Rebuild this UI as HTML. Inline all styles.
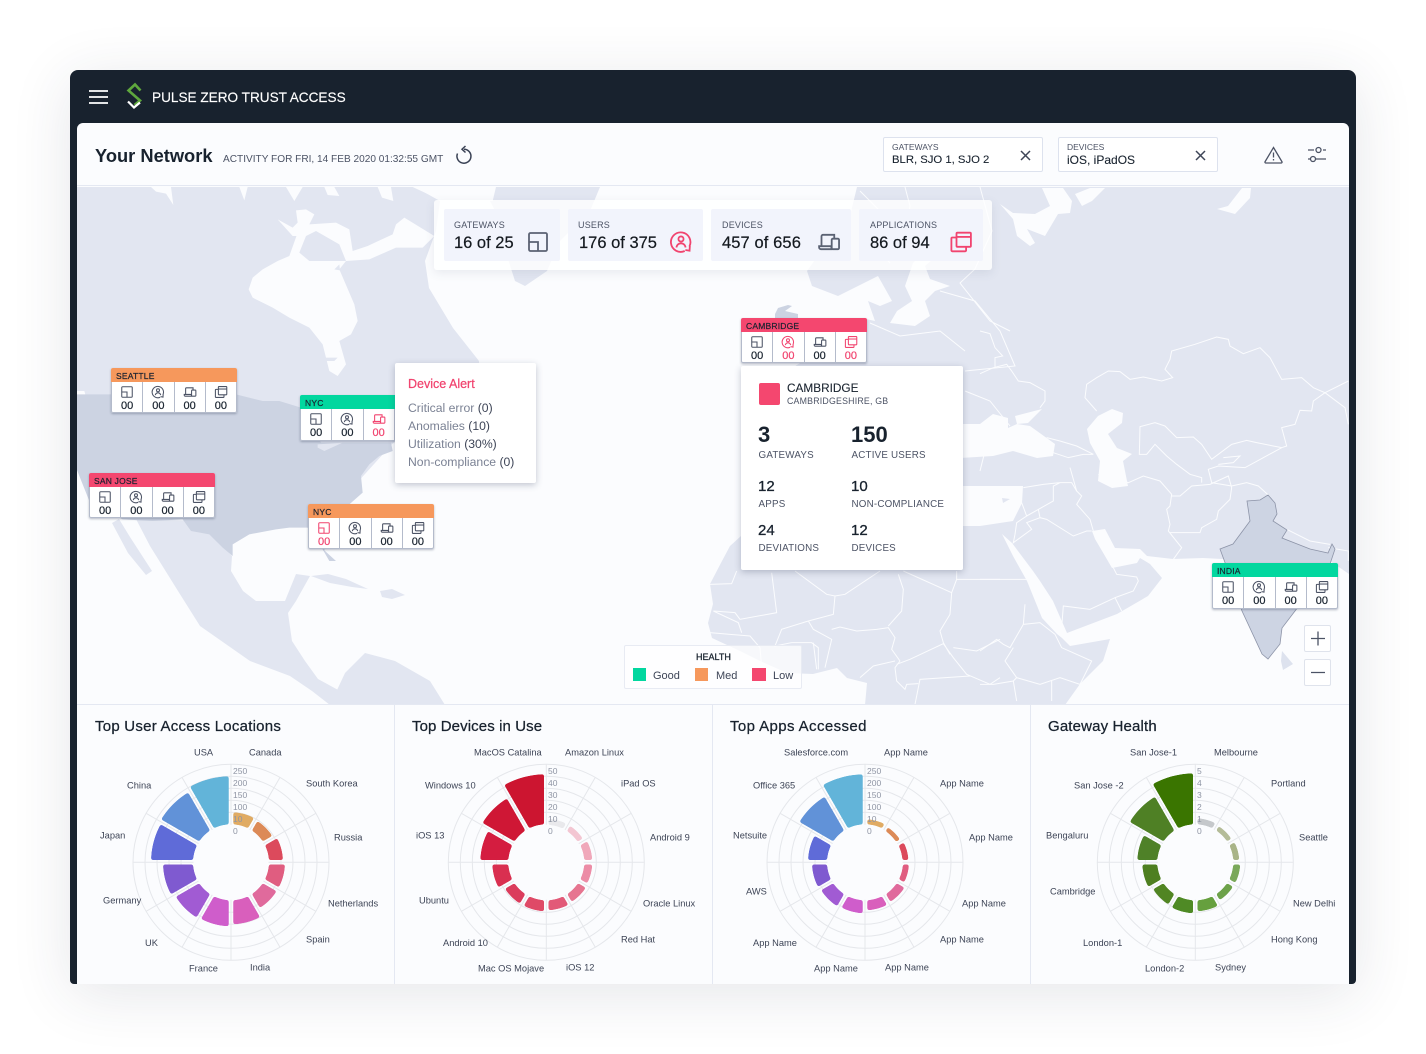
<!DOCTYPE html>
<html lang="en"><head><meta charset="utf-8"><title>Pulse Zero Trust Access</title>
<style>
*{box-sizing:border-box}
html,body{margin:0;padding:0;background:#fff}
body{width:1426px;height:1054px;position:relative;overflow:hidden;font-family:"Liberation Sans",sans-serif;color:#18222e}
.abs,.frame,.panel,.mapwrap,.t{position:absolute}
.frame{left:70px;top:70px;width:1286px;height:914px;background:#18222e;border-radius:8px 8px 4px 4px;box-shadow:0 10px 60px rgba(40,50,70,.12)}
.panel{left:77px;top:123px;width:1272px;height:861px;background:#fbfcfe;border-radius:6px 6px 0 0;overflow:hidden}
.mapwrap{left:77px;top:185px;width:1272px;height:519px;overflow:hidden;background:#fbfcfe;border-top:1px solid #e4e8f2}
.mapwrap svg{position:absolute;left:-77px;top:-185px}
.t{white-space:nowrap}
.stat{position:absolute;left:434px;top:200px;width:558px;height:70px;background:rgba(255,255,255,.8);border-radius:3px;box-shadow:0 3px 10px rgba(70,80,110,.1)}
.cell{position:absolute;top:9px;height:52px;background:rgba(240,243,252,.88);border-radius:2px}
.cell i{position:absolute;left:10px;top:11px;font:normal 9px "Liberation Sans",sans-serif;color:#4c5365;letter-spacing:.2px}
.cell u{position:absolute;left:10px;top:24px;font-size:16.5px;line-height:20px;text-decoration:none;color:#14191f;-webkit-text-stroke:.2px #14191f;white-space:nowrap}
.cell svg{position:absolute;top:21px;width:24px;height:24px;color:#5b6273}
.m{position:absolute;width:126px;height:45px;background:#fff;border-radius:2px;box-shadow:0 1px 2px rgba(50,60,90,.35)}
.m b{display:block;height:14px;line-height:16px;padding-left:5px;font-size:8.5px;font-weight:normal;color:#1a2230;-webkit-text-stroke:.2px #1a2230;letter-spacing:.2px;border-radius:2px 2px 0 0}
.m .c{display:flex;height:31px;border:1px solid #b4bbcb;border-top:0;border-radius:0 0 2px 2px}
.m .c div{flex:1;border-left:1px solid #b4bbcb;text-align:center;font-size:11px;line-height:11px;color:#18222e;-webkit-text-stroke:.2px currentColor}
.m .c div:first-child{border-left:0}
.m .c svg{display:block;width:14px;height:14px;margin:3px auto 2px;color:#4c5365;-webkit-text-stroke:0}
.m .r{color:#f1446f!important}
.m .r svg{color:#f1446f}
.O{background:#f6985c}.G{background:#02d79f}.P{background:#f4476f}
.box{position:absolute;top:137px;width:160px;height:35px;background:#fff;border:1.5px solid #dde2ee;border-radius:2px}
.box i{position:absolute;left:8px;top:4px;font:normal 8.5px "Liberation Sans",sans-serif;color:#4c5365}
.box u{position:absolute;left:8px;top:15px;font-size:12px;text-decoration:none;color:#18222e;-webkit-text-stroke:.1px #18222e;white-space:nowrap}
.card{position:absolute;background:#fff;border-radius:2px;box-shadow:0 2px 7px rgba(60,70,100,.3)}
.lb{position:absolute;font-size:9.8px;color:#4c5365;white-space:nowrap;letter-spacing:.2px}
.nm{position:absolute;color:#18222e;white-space:nowrap;-webkit-text-stroke:.3px #18222e}
.al{position:absolute;left:13px;font-size:12.2px;color:#7b8294;white-space:nowrap}
.al span{color:#3e4557}
.ttl{position:absolute;top:718px;font-size:15px;line-height:18px;color:#18222e;-webkit-text-stroke:.25px #18222e;letter-spacing:.15px;white-space:nowrap}
.zb{position:absolute;left:1304px;width:27px;height:27px;background:#fff;border:1px solid #dfe3ec;border-radius:2px}
</style></head><body>
<svg width="0" height="0" style="position:absolute"><defs>
<symbol id="ig" viewBox="0 0 16 16" fill="none" stroke="currentColor" stroke-width="1.2"><rect x="2" y="2" width="12" height="12" rx="1"/><path d="M2 8h6v6"/></symbol>
<symbol id="iu" viewBox="0 0 16 16" fill="none" stroke="currentColor" stroke-width="1.2"><path d="M13.6 11A6.500 6.500 0 1 0 10.500 14"/><circle cx="8" cy="6" r="1.7"/><path d="M4.900 11.600C5.300 9.700 6.400 8.900 8 8.900s2.700.8 3.100 2.700"/><path d="M13.900 10.600l-.2 3.200-2.800-.5"/></symbol>
<symbol id="id" viewBox="0 0 16 16" fill="none" stroke="currentColor" stroke-width="1.2"><path d="M3 10.500V4.200a1 1 0 0 1 1-1h7.500v2.400"/><rect x="9.800" y="5.800" width="4.900" height="7" rx=".8"/><path d="M1.400 10.800h8.200v2H2.600a1.200 1.200 0 0 1-1.200-1.200z"/></symbol>
<symbol id="ia" viewBox="0 0 16 16" fill="none" stroke="currentColor" stroke-width="1.2"><rect x="5" y="1.800" width="9.600" height="9.400" rx=".6"/><path d="M5 4.600h9.400"/><path d="M5 5H2.200a.6.6 0 0 0-.6.6v8a.6.6 0 0 0 .6.6h8.600a.6.6 0 0 0 .6-.6V11.200"/></symbol>
<mask id="sp" maskUnits="userSpaceOnUse" x="-110" y="-110" width="220" height="220"><rect x="-110" y="-110" width="220" height="220" fill="#fff"/><g stroke="#000" stroke-width="4.500"><path d="M0-105V105M-105 0H105M-52.500-91L52.500 91M52.500-91L-52.500 91M-91-52.500L91 52.500M91-52.500L-91 52.500"/></g></mask>
<filter id="rnd" x="-10%" y="-10%" width="120%" height="120%" color-interpolation-filters="sRGB"><feGaussianBlur stdDeviation="1.100"/><feComponentTransfer><feFuncA type="linear" slope="8" intercept="-3.500"/></feComponentTransfer></filter>
<g id="grid" fill="none" stroke="#e5e7eb" stroke-width="1"><circle r="50"/><circle r="62"/><circle r="74"/><circle r="86"/><circle r="98"/><path d="M0-98V98M-98 0H98M-49-84.900L49 84.900M49-84.900L-49 84.900M-84.900-49L84.900 49M84.900-49L-84.900 49"/><circle r="37.500" fill="#fbfcfe" stroke="none"/></g>
</defs></svg>

<div class="frame"></div>
<div class="panel"></div>

<!-- top bar -->
<svg class="abs" style="left:0;top:0" width="1426" height="125" viewBox="0 0 1426 125" fill="none">
<path d="M89 91h19M89 97h19M89 103h19" stroke="#fff" stroke-width="1.800"/>
<path d="M140.500 90.500L135 84.500L128.500 90.500L140 100.500L134.500 105" stroke="#5fa83d" stroke-width="2.600"/>
<path d="M128 101.500L134 107.500L140 102.500" stroke="#fff" stroke-width="2.200"/>
</svg>
<div class="t" style="left:152px;top:90px;font-size:13.6px;line-height:16px;color:#fff;-webkit-text-stroke:.15px #fff">PULSE ZERO TRUST ACCESS</div>

<!-- header -->
<div class="t" style="left:95px;top:145px;font-size:18.3px;line-height:22px;font-weight:bold;color:#18222e">Your Network</div>
<div class="t" style="left:223px;top:154px;font-size:10.1px;line-height:12px;color:#4c5365">ACTIVITY FOR FRI, 14 FEB 2020 01:32:55 GMT</div>
<div class="box" style="left:883px"><i>GATEWAYS</i><u style="font-size:11.3px;top:15.500px">BLR, SJO 1, SJO 2</u></div>
<div class="box" style="left:1058px"><i>DEVICES</i><u>iOS, iPadOS</u></div>

<!-- map -->
<div class="mapwrap">
<svg width="1426" height="1054" viewBox="0 0 1426 1054">
<g fill="#e2e6f1">
<polygon points="77,186 415,186 440,200 436,230 425,260 429,287 453,327 479,360 480,400 395,440 345,495 300,515 77,465"/>
<polygon points="493,186 490,200 503,225 507,255 515,280 525,285 547,270 560,240 590,210 600,186"/>
<polygon points="647,222 660,213 671,216 668,228 654,233"/>
<polygon points="857,186 1349,186 1349,704 865,704 867,682 847,677 837,667 813,673 787,672 760,660 740,650 712,637 708,622 713,603 710,583 722,560 730,545 741,535 741,400 800,362 835,340 850,325 866,318 875,320 868,300 880,305 892,300 878,275 858,285 838,295 812,285 807,270 825,245 850,215"/>
<!-- Mexico & Central America -->
<polygon points="119,518 130,536 152,570 146,574 128,552 112,522"/>
<polygon points="136,518 150,545 178,590 200,625 250,660 290,675 312,690 330,704 345,704 340,690 318,678 305,660 292,640 288,612 296,600 310,575 296,573 285,600 256,600 243,590 231,570 232,555 200,520"/>
<polygon points="330,704 345,672 365,652 395,660 430,680 445,704"/>
<polygon points="311,575 328,573 346,578 368,588 352,586 330,582"/>
<polygon points="380,590 392,588 405,594 392,598 382,596"/>
</g>
<!-- Canada water -->
<g transform="translate(76 180) scale(.33333)" fill="#fbfcfe">
<polygon points="518,325 530,290 560,265 605,240 640,225 665,155 690,165 670,215 700,240 775,240 810,240 790,265 835,370 845,420 825,460 790,480 810,550 785,585 760,570 740,490 700,440 640,410 590,380 530,350"/>
<polygon points="605,115 650,140 665,125 660,88 690,85 715,100 700,130 780,125 820,145 830,210 875,195 950,160 960,130 985,110 1075,165 1040,200 960,200 880,235 810,240 790,190 720,150 690,165 650,165"/>
<polygon points="225,18 285,18 292,72 270,38 240,32"/>
<polygon points="490,18 515,18 505,58"/>
<polygon points="630,18 680,18 655,60"/>
<polygon points="745,18 775,18 790,45 755,42"/>
<polygon points="905,18 945,18 952,60 918,50"/>
<polygon points="1010,18 1260,18 1250,60 1090,55"/>
<polygon points="0,630 25,630 35,665 0,660"/>
</g>
<g transform="translate(76 180) scale(.33333)">
<polygon fill="#e2e6f1" points="775,265 790,250 792,268"/>
<polygon fill="#e2e6f1" points="745,530 785,530 775,540 750,540"/>
<polygon fill="#ccd3e2" points="0,640 480,640 560,660 610,660 675,680 735,785 945,785 950,810 910,825 880,850 855,885 860,935 820,970 760,1030 745,1108 780,1140 760,1140 740,1105 695,1040 640,1040 600,1045 520,1060 470,1090 470,1125 440,1100 400,1060 345,1050 320,1015 230,1020 140,1015 40,960 0,860"/>
<polygon fill="#e2e6f1" points="725,790 800,785 745,810 725,800"/>
</g>
<!-- Eurasia/Africa water -->
<g fill="#fbfcfe">
<polygon points="1000,203 1013,212 1035,213 1050,205 1042,187 1063,187 1072,200 1070,212 1058,213 1045,235 1027,228 1035,242 1030,245 1017,235 1013,218"/>
<polygon points="1075,193 1090,187 1105,187 1092,200 1082,205"/>
<polygon points="1217,208 1228,205 1242,187 1251,187 1250,197 1235,213"/>
<polygon points="1087,428 1098,415 1112,408 1123,412 1122,422 1108,433 1117,447 1132,453 1123,460 1128,485 1112,487 1098,480 1100,460 1090,442"/>
<polygon points="960,423 980,423 993,413 1008,417 1008,427 1017,423 1030,425 1055,443 1053,455 1037,457 1013,450 993,455 960,457"/>
<polygon points="1015,415 1042,408 1028,422 1017,423"/>
<polygon points="960,485 1023,485 1022,502 1013,520 980,525 960,525"/>
<polygon points="925,250 913,262 905,285 912,300 897,310 890,322 915,325 930,315 925,300 935,290 950,285 930,278 925,265 940,252"/>
<polygon points="1349,573 1349,704 1065,704 1080,683 1103,660 1110,638 1070,645 1062,637 1057,633 1042,617 1027,580 1013,555 1002,533 1012,542 1033,570 1040,580 1053,600 1067,632 1117,613 1148,595 1162,577 1150,563 1140,557 1137,562 1112,567 1105,555 1095,538 1092,530 1105,528 1115,547 1140,548 1147,555 1173,558 1203,557 1260,560 1330,560"/>
</g>
<polygon points="1002,497 1010,498 1003,502" fill="#e2e6f1"/>
<polygon points="1282,650 1293,663 1283,669 1281,660" fill="#dde2ee"/>
<polygon points="775,313 778,307 788,304 792,305 785,310 798,313 798,318 775,318" fill="#ccd3e2"/>
<!-- Borders -->
<g transform="translate(980 180) scale(.33333)" fill="none" stroke="#fbfcfe" stroke-width="3">
<path d="M0 450L30 458 45 500 68 525 45 530 45 558M0 578L40 560 80 550 95 570 115 600 150 605 195 630 195 660 180 680"/>
<path d="M350 690L315 650 320 610 350 590 385 570 420 572 450 595 490 588 545 600 578 590 555 565 570 535 575 510 645 490 710 468 745 475 750 495 790 518 840 500 870 530 905 595 965 590 1000 620 1035 635 1105 600"/>
<path d="M1035 635L1000 660 995 690 960 688 945 730 905 740 920 795 905 800 830 785 800 778 755 790 695 835 665 790 640 768 590 770 555 735 525 725 480 737 478 820 500 820 525 790 560 825 590 850 630 880 665 890 665 905"/>
<path d="M905 800L850 830 795 860 715 855 685 865 695 905 755 915M730 830L780 825 760 845 715 850M1035 635L1095 680 1105 730"/>
<path d="M200 770L240 780 290 795 340 820M220 815L265 830 310 820 340 820M270 860L290 930 305 945 290 970 330 1015 340 1050"/>
<path d="M355 880L445 905 490 885 540 900 575 940 570 975 560 985 570 1030 565 1050 605 1100 580 1135"/>
<path d="M575 945L600 945 635 915 690 910 745 885 755 920 750 955 715 990 710 1015 665 1040 660 1055 570 1055M755 915L800 905 835 915 865 942"/>
<path d="M130 920L190 910 240 905 275 905 290 930M125 965L140 1005 220 960 220 915 240 905M175 985L180 1010 200 1015 280 1065 320 1050 335 1050M140 1005L110 1025 105 1060 100 1085 155 1045 140 1025 180 1010"/>
<path d="M400 1160L410 1180 470 1188 475 1200 460 1230 405 1250 425 1290M405 1250L330 1285 250 1275 245 1340"/>
<path d="M0 1195H140M135 1270L130 1330 90 1400 70 1390 50 1375 0 1410M130 1330L180 1325 225 1360 245 1400 335 1440 300 1510 240 1490 180 1510 110 1490 75 1440 100 1400M110 1490L100 1500 40 1510 0 1510M100 1500L110 1560M215 1500V1560"/>
<path d="M920 1045L990 1080 1050 1090M1045 1100L1105 1110 1105 1140"/>
</g>
<g transform="translate(600 560) scale(.33333)" fill="none" stroke="#fbfcfe" stroke-width="3">
<path d="M515 35L530 155 420 175 405 155 340 150M330 70L395 68 410 30M585 30L680 100 705 105 735 100 840 30M705 105L700 160 625 180 545 205 525 255 575 245M625 180L640 205 695 235 675 320M695 205L720 198 770 210 830 205 865 200 885 230 875 265 900 300M865 195L905 150 910 85 895 40M910 30L1055 95 1050 160 1020 210 1030 245 1050 280M1070 30V55H1200M1055 95L1070 55M890 310L930 295 1030 248 1060 290 1100 340 1110 345 960 355 945 430M900 300L885 320 890 360 915 385 920 370 955 368M885 300L820 315 780 350M575 245H635L655 260V325M640 245L650 325M330 215L390 220 450 225 480 260 485 320M340 150L415 185 425 215M1060 260L1130 270 1200 235M1100 340L1170 370 1200 350"/>
</g>
<g fill="none" stroke="#fbfcfe" stroke-width="1">
<path d="M860 190L880 210 870 240 890 262M905 186L910 205 905 235 925 250M980 186L992 230 975 268 960 282 990 320 1010 330M940 290L975 300 1000 330 1015 365 965 370M870 322L900 335 940 330 965 350M965 390L990 400 1010 425M965 440L985 450 980 470"/>
</g>
<!-- India -->
<polygon points="1268,494 1275,502 1277,513 1273,520 1287,529 1282,537 1310,548 1328,552 1332,543 1335,548 1330,563 1295,610 1282,627 1280,643 1268,658 1262,653 1242,610 1227,567 1220,548 1233,543 1250,520 1247,500 1260,499" fill="#cdd4e3" stroke="#8d94a8" stroke-width=".8"/>
</svg>
</div>

<!-- Stats -->
<div class="stat">
<div class="cell" style="left:10px;width:116px"><i>GATEWAYS</i><u>16 of 25</u><svg style="left:82px"><use href="#ig"/></svg></div>
<div class="cell" style="left:134px;width:135px"><i>USERS</i><u style="left:11px">176 of 375</u><svg style="left:101px;color:#f1446f"><use href="#iu"/></svg></div>
<div class="cell" style="left:277px;width:140px"><i style="left:11px">DEVICES</i><u style="left:11px;letter-spacing:.1px">457 of 656</u><svg style="left:106px"><use href="#id"/></svg></div>
<div class="cell" style="left:425px;width:124px"><i style="left:11px">APPLICATIONS</i><u style="left:11px">86 of 94</u><svg style="left:90px;color:#f1446f"><use href="#ia"/></svg></div>
</div>

<!-- Markers -->
<div class="m" style="left:111px;top:368px"><b class="O">SEATTLE</b><div class="c"><div><svg><use href="#ig"/></svg>00</div><div><svg><use href="#iu"/></svg>00</div><div><svg><use href="#id"/></svg>00</div><div><svg><use href="#ia"/></svg>00</div></div></div>
<div class="m" style="left:300px;top:395px;height:46px"><b class="G">NYC</b><div class="c" style="height:32px"><div><svg><use href="#ig"/></svg>00</div><div><svg><use href="#iu"/></svg>00</div><div class="r"><svg><use href="#id"/></svg>00</div><div><svg><use href="#ia"/></svg>00</div></div></div>
<div class="m" style="left:89px;top:473px"><b class="P">SAN JOSE</b><div class="c"><div><svg><use href="#ig"/></svg>00</div><div><svg><use href="#iu"/></svg>00</div><div><svg><use href="#id"/></svg>00</div><div><svg><use href="#ia"/></svg>00</div></div></div>
<div class="m" style="left:308px;top:504px"><b class="O">NYC</b><div class="c"><div class="r"><svg><use href="#ig"/></svg>00</div><div><svg><use href="#iu"/></svg>00</div><div><svg><use href="#id"/></svg>00</div><div><svg><use href="#ia"/></svg>00</div></div></div>
<div class="m" style="left:741px;top:318px"><b class="P">CAMBRIDGE</b><div class="c"><div><svg><use href="#ig"/></svg>00</div><div class="r"><svg><use href="#iu"/></svg>00</div><div><svg><use href="#id"/></svg>00</div><div class="r"><svg><use href="#ia"/></svg>00</div></div></div>
<div class="m" style="left:1212px;top:563px;height:46px"><b class="G">INDIA</b><div class="c" style="height:32px"><div><svg><use href="#ig"/></svg>00</div><div><svg><use href="#iu"/></svg>00</div><div><svg><use href="#id"/></svg>00</div><div><svg><use href="#ia"/></svg>00</div></div></div>

<!-- Device alert -->
<div class="card" style="left:395px;top:363px;width:141px;height:120px">
<div class="t" style="left:13px;top:14px;font-size:12.500px;color:#f1446f;-webkit-text-stroke:.25px #f1446f">Device Alert</div>
<div class="al" style="top:38px">Critical error <span>(0)</span></div>
<div class="al" style="top:56px">Anomalies <span>(10)</span></div>
<div class="al" style="top:74px">Utilization <span>(30%)</span></div>
<div class="al" style="top:92px">Non-compliance <span>(0)</span></div>
</div>

<!-- Cambridge card -->
<div class="card" style="left:741px;top:366px;width:222px;height:204px">
<div class="abs" style="left:18px;top:17px;width:21px;height:22px;background:#f4476f;border-radius:2px"></div>
<div class="nm" style="left:46px;top:15px;font-size:11.800px;-webkit-text-stroke:.1px #18222e">CAMBRIDGE</div>
<div class="lb" style="left:46px;top:30px;font-size:8.800px">CAMBRIDGESHIRE, GB</div>
<div class="nm" style="left:17px;top:56px;font-size:22px;font-weight:bold;-webkit-text-stroke:0">3</div>
<div class="nm" style="left:110px;top:56px;font-size:22px;font-weight:bold;-webkit-text-stroke:0">150</div>
<div class="lb" style="left:17.500px;top:84px">GATEWAYS</div>
<div class="lb" style="left:110.500px;top:84px">ACTIVE USERS</div>
<div class="nm" style="left:17px;top:112px;font-size:15px">12</div>
<div class="nm" style="left:110px;top:112px;font-size:15px">10</div>
<div class="lb" style="left:17.500px;top:133px">APPS</div>
<div class="lb" style="left:110.500px;top:133px">NON-COMPLIANCE</div>
<div class="nm" style="left:17px;top:156px;font-size:15px">24</div>
<div class="nm" style="left:110px;top:156px;font-size:15px">12</div>
<div class="lb" style="left:17.500px;top:177px">DEVIATIONS</div>
<div class="lb" style="left:110.500px;top:177px">DEVICES</div>
</div>

<!-- Legend -->
<div class="abs" style="left:624px;top:645px;width:178px;height:44px;background:rgba(255,255,255,.72);border:1px solid #e8ebf3;border-radius:2px"></div>
<div class="t" style="left:696px;top:652px;font-size:9px;line-height:11px;color:#18222e;-webkit-text-stroke:.25px #18222e">HEALTH</div>
<div class="abs" style="left:633px;top:668px;width:13px;height:13px;background:#02d79f"></div>
<div class="t" style="left:653px;top:669.500px;font-size:11px;line-height:13px;color:#3e4557">Good</div>
<div class="abs" style="left:695px;top:668px;width:13px;height:13px;background:#f6985c"></div>
<div class="t" style="left:716px;top:669.500px;font-size:11px;line-height:13px;color:#3e4557">Med</div>
<div class="abs" style="left:752px;top:668px;width:14px;height:13px;background:#f4476f"></div>
<div class="t" style="left:773px;top:669.500px;font-size:11px;line-height:13px;color:#3e4557">Low</div>

<div class="zb" style="top:625px"></div>
<div class="zb" style="top:659px"></div>

<!-- Header & misc icons -->
<svg class="abs" style="left:0;top:0" width="1426" height="704" viewBox="0 0 1426 704" fill="none">
<g stroke="#3a4255" stroke-width="1.500">
<path d="M464 149.200A7 7 0 1 1 457.500 153.500"/><path d="M465.500 146L462 149.200L465.500 152.500"/>
</g>
<g stroke="#3e4557" stroke-width="1.500">
<path d="M1021 151L1030 160M1030 151L1021 160M1196 151L1205 160M1205 151L1196 160"/>
</g>
<g stroke="#4c5365" stroke-width="1.300">
<path d="M1273.500 147.500L1281.800 161.500A.9 .9 0 0 1 1281 163H1266A.9 .9 0 0 1 1265.200 161.500Z"/><path d="M1273.500 152.500V157.500M1273.500 159V160.500"/>
<path d="M1308 150H1314M1323 150H1326M1308 159H1310M1316 159H1326"/><circle cx="1318.500" cy="150" r="2.500"/><circle cx="1313" cy="159" r="2.500"/>
<path d="M1311 638.500H1325M1318 631.500V645.500M1311 672.500H1325"/>
</g>
</svg>

<!-- Bottom panels -->
<div class="abs" style="left:77px;top:704px;width:1272px;height:280px;background:#fbfcfe;border-top:1px solid #e4e8f2"></div>
<div class="abs" style="left:394px;top:704px;width:1px;height:280px;background:#e4e8f2"></div>
<div class="abs" style="left:712px;top:704px;width:1px;height:280px;background:#e4e8f2"></div>
<div class="abs" style="left:1030px;top:704px;width:1px;height:280px;background:#e4e8f2"></div>
<div class="ttl" style="left:95px;letter-spacing:.24px">Top User Access Locations</div>
<div class="ttl" style="left:412px;letter-spacing:.1px">Top Devices in Use</div>
<div class="ttl" style="left:730px;letter-spacing:.4px">Top Apps Accessed</div>
<div class="ttl" style="left:1048px">Gateway Health</div>

<svg class="abs" style="left:0;top:0" width="1426" height="1054" viewBox="0 0 1426 1054">
<g transform="translate(231 862.300)"><use href="#grid"/>
<g filter="url(#rnd)"><g mask="url(#sp)" fill="none" stroke-dasharray="30 330">
<circle r="44" stroke-width="12" pathLength="360" stroke="#e0ab63" transform="rotate(-90)"/>
<circle r="43.500" stroke-width="11" pathLength="360" stroke="#dc8a57" transform="rotate(-60)"/>
<circle r="45" stroke-width="14" pathLength="360" stroke="#dc4a5c" transform="rotate(-30)"/>
<circle r="46" stroke-width="16" pathLength="360" stroke="#e05d80" transform="rotate(0)"/>
<circle r="46" stroke-width="16" pathLength="360" stroke="#e06a9c" transform="rotate(30)"/>
<circle r="50" stroke-width="24" pathLength="360" stroke="#d95fbc" transform="rotate(60)"/>
<circle r="51" stroke-width="26" pathLength="360" stroke="#cf5dcb" transform="rotate(90)"/>
<circle r="51.500" stroke-width="27" pathLength="360" stroke="#a15bd3" transform="rotate(120)"/>
<circle r="53" stroke-width="30" pathLength="360" stroke="#7f5ad0" transform="rotate(150)"/>
<circle r="59" stroke-width="42" pathLength="360" stroke="#5f6bd8" transform="rotate(180)"/>
<circle r="60" stroke-width="44" pathLength="360" stroke="#6192d8" transform="rotate(210)"/>
<circle r="62" stroke-width="48" pathLength="360" stroke="#62b4d9" transform="rotate(240)"/>
</g></g></g>
<g transform="translate(546.300 862.300)"><use href="#grid"/>
<g filter="url(#rnd)"><g mask="url(#sp)" fill="none" stroke-dasharray="30 330">
<circle r="40.500" stroke-width="6" pathLength="360" stroke="#e9e9ec" transform="rotate(-90)"/>
<circle r="40.500" stroke-width="6" pathLength="360" stroke="#f3c6d2" transform="rotate(-60)"/>
<circle r="42" stroke-width="8" pathLength="360" stroke="#f0a8ba" transform="rotate(-30)"/>
<circle r="42" stroke-width="8" pathLength="360" stroke="#ec8ca6" transform="rotate(0)"/>
<circle r="42.500" stroke-width="9" pathLength="360" stroke="#e67590" transform="rotate(30)"/>
<circle r="43" stroke-width="10" pathLength="360" stroke="#e25a78" transform="rotate(60)"/>
<circle r="43.500" stroke-width="11" pathLength="360" stroke="#df4a67" transform="rotate(90)"/>
<circle r="43.500" stroke-width="11" pathLength="360" stroke="#db3c5c" transform="rotate(120)"/>
<circle r="46" stroke-width="16" pathLength="360" stroke="#d92f50" transform="rotate(150)"/>
<circle r="52" stroke-width="28" pathLength="360" stroke="#d41d40" transform="rotate(180)"/>
<circle r="56.500" stroke-width="37" pathLength="360" stroke="#cf1735" transform="rotate(210)"/>
<circle r="63" stroke-width="50" pathLength="360" stroke="#cc1530" transform="rotate(240)"/>
</g></g></g>
<g transform="translate(865 862.300)"><use href="#grid"/>
<g filter="url(#rnd)"><g mask="url(#sp)" fill="none" stroke-dasharray="30 330">
<circle r="40.500" stroke-width="5" pathLength="360" stroke="#e0ab63" transform="rotate(-90)"/>
<circle r="39.500" stroke-width="4.500" pathLength="360" stroke="#dc8a57" transform="rotate(-60)"/>
<circle r="40.500" stroke-width="6" pathLength="360" stroke="#dc4a5c" transform="rotate(-30)"/>
<circle r="41" stroke-width="6" pathLength="360" stroke="#e05d80" transform="rotate(0)"/>
<circle r="42.500" stroke-width="9" pathLength="360" stroke="#e06a9c" transform="rotate(30)"/>
<circle r="43" stroke-width="10" pathLength="360" stroke="#d95fbc" transform="rotate(60)"/>
<circle r="44.500" stroke-width="13" pathLength="360" stroke="#cf5dcb" transform="rotate(90)"/>
<circle r="45" stroke-width="14" pathLength="360" stroke="#a15bd3" transform="rotate(120)"/>
<circle r="45.500" stroke-width="15" pathLength="360" stroke="#7f5ad0" transform="rotate(150)"/>
<circle r="47.500" stroke-width="19" pathLength="360" stroke="#5f6bd8" transform="rotate(180)"/>
<circle r="57.500" stroke-width="39" pathLength="360" stroke="#6192d8" transform="rotate(210)"/>
<circle r="63" stroke-width="50" pathLength="360" stroke="#62b4d9" transform="rotate(240)"/>
</g></g></g>
<g transform="translate(1195.300 862.300)"><use href="#grid"/>
<g filter="url(#rnd)"><g mask="url(#sp)" fill="none" stroke-dasharray="30 330">
<circle r="41" stroke-width="6" pathLength="360" stroke="#c5c8cb" transform="rotate(-90)"/>
<circle r="40.500" stroke-width="5" pathLength="360" stroke="#b4bc98" transform="rotate(-60)"/>
<circle r="41" stroke-width="6" pathLength="360" stroke="#a9b488" transform="rotate(-30)"/>
<circle r="41.500" stroke-width="7" pathLength="360" stroke="#7aa85a" transform="rotate(0)"/>
<circle r="41.500" stroke-width="7" pathLength="360" stroke="#6da24a" transform="rotate(30)"/>
<circle r="43.500" stroke-width="11" pathLength="360" stroke="#66a03e" transform="rotate(60)"/>
<circle r="44.500" stroke-width="13" pathLength="360" stroke="#4f8a25" transform="rotate(90)"/>
<circle r="44" stroke-width="12" pathLength="360" stroke="#518523" transform="rotate(120)"/>
<circle r="45.500" stroke-width="15" pathLength="360" stroke="#4e7f20" transform="rotate(150)"/>
<circle r="48" stroke-width="20" pathLength="360" stroke="#4f8128" transform="rotate(180)"/>
<circle r="57.500" stroke-width="39" pathLength="360" stroke="#4f8025" transform="rotate(210)"/>
<circle r="63.500" stroke-width="51" pathLength="360" stroke="#3a7500" transform="rotate(240)"/>
</g></g></g>

<g font-family="Liberation Sans, sans-serif" font-size="8.500" fill="#8f95a4">
<text x="233" y="774">250</text><text x="233" y="786">200</text><text x="233" y="798">150</text><text x="233" y="810">100</text><text x="233" y="822">10</text><text x="233" y="834">0</text>
<text x="548" y="774">50</text><text x="548" y="786">40</text><text x="548" y="798">30</text><text x="548" y="810">20</text><text x="548" y="822">10</text><text x="548" y="834">0</text>
<text x="867" y="774">250</text><text x="867" y="786">200</text><text x="867" y="798">150</text><text x="867" y="810">100</text><text x="867" y="822">10</text><text x="867" y="834">0</text>
<text x="1197" y="774">5</text><text x="1197" y="786">4</text><text x="1197" y="798">3</text><text x="1197" y="810">2</text><text x="1197" y="822">1</text><text x="1197" y="834">0</text>
</g>
<g font-family="Liberation Sans, sans-serif" font-size="9.300" fill="#3d4456">
<text x="194" y="755.500">USA</text><text x="249" y="755.500">Canada</text><text x="127" y="788.500">China</text><text x="306" y="786.500">South Korea</text><text x="100" y="838.500">Japan</text><text x="334" y="840.500">Russia</text><text x="103" y="903.500">Germany</text><text x="328" y="906.500">Netherlands</text><text x="145" y="946">UK</text><text x="306" y="942.500">Spain</text><text x="189" y="971.500">France</text><text x="250" y="970.500">India</text>
<text x="474" y="755.500">MacOS Catalina</text><text x="565" y="755.500">Amazon Linux</text><text x="425" y="788.500">Windows 10</text><text x="621" y="786.500">iPad OS</text><text x="416" y="838.500">iOS 13</text><text x="650" y="840.500">Android 9</text><text x="419" y="903.500">Ubuntu</text><text x="643" y="906.500">Oracle Linux</text><text x="443" y="946">Android 10</text><text x="621" y="942.500">Red Hat</text><text x="478" y="971.500">Mac OS Mojave</text><text x="566" y="970.500">iOS 12</text>
<text x="784" y="755.500">Salesforce.com</text><text x="884" y="755.500">App Name</text><text x="753" y="788.500">Office 365</text><text x="940" y="786.500">App Name</text><text x="733" y="838.500">Netsuite</text><text x="969" y="840.500">App Name</text><text x="746" y="894.500">AWS</text><text x="962" y="906.500">App Name</text><text x="753" y="946">App Name</text><text x="940" y="942.500">App Name</text><text x="814" y="971.500">App Name</text><text x="885" y="970.500">App Name</text>
<text x="1130" y="755.500">San Jose-1</text><text x="1214" y="755.500">Melbourne</text><text x="1074" y="788.500">San Jose -2</text><text x="1271" y="786.500">Portland</text><text x="1046" y="838.500">Bengaluru</text><text x="1299" y="840.500">Seattle</text><text x="1050" y="894.500">Cambridge</text><text x="1293" y="906.500">New Delhi</text><text x="1083" y="946">London-1</text><text x="1271" y="942.500">Hong Kong</text><text x="1145" y="971.500">London-2</text><text x="1215" y="970.500">Sydney</text>
</g>
</svg>
</body></html>
